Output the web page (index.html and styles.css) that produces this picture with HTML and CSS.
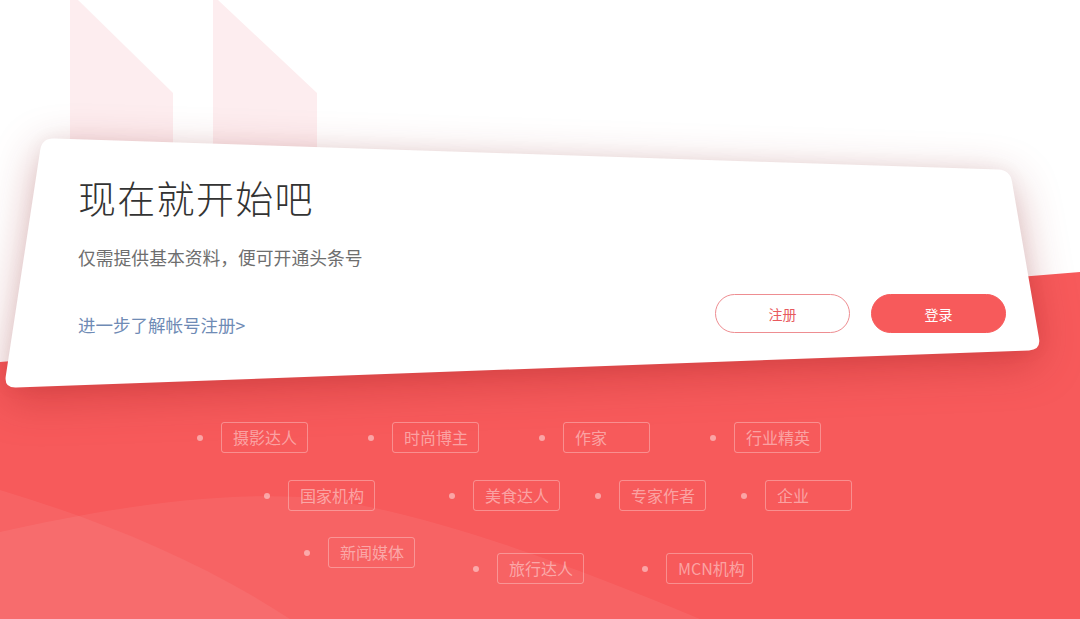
FILE: index.html
```html
<!DOCTYPE html>
<html lang="zh-CN">
<head>
<meta charset="utf-8">
<title>现在就开始吧</title>
<link rel="stylesheet" href="styles.css">
</head>
<body>
<div class="page">
  <svg class="backdrop" viewBox="0 0 1080 619" width="1080" height="619" aria-hidden="true">
    <polygon points="70,0 78,0 173,93 173,150 70,150" fill="#fdedef"/>
    <polygon points="213,0 218,0 317,93 317,150 213,150" fill="#fdedef"/>
    <polygon points="0,362 1080,272 1080,619 0,619" fill="#f75a5b"/>
    <path d="M0,532 C90,512 200,492 300,497 C400,503 560,560 700,619 L0,619 Z" fill="#ffffff" fill-opacity="0.06"/>
    <path d="M0,490 C100,520 200,560 290,619 L0,619 Z" fill="#ffffff" fill-opacity="0.06"/>
  </svg>

  <section class="card">
    <svg class="card-shape" width="1045" height="262" viewBox="0 0 1045 262" aria-hidden="true">
      <path d="M54,8.4 L998,39.6 Q1010,40 1012,51.8 L1039,208.2 Q1041,220 1029,220.4 L16,257.6 Q4,258 5.8,246.1 L40.2,19.9 Q42,8 54,8.4 Z" fill="#ffffff"/>
    </svg>
    <h1 class="title">现在就开始吧</h1>
    <p class="subtitle">仅需提供基本资料，便可开通头条号</p>
    <div class="actions">
      <a class="more" href="#">进一步了解帐号注册&gt;</a>
      <div class="buttons">
        <button class="btn btn-outline">注册</button>
        <button class="btn btn-fill">登录</button>
      </div>
    </div>
  </section>

  <section class="tags">
    <div class="row row1">
      <div class="item"><span class="dot"></span><span class="tag">摄影达人</span></div>
      <div class="item"><span class="dot"></span><span class="tag">时尚博主</span></div>
      <div class="item"><span class="dot"></span><span class="tag">作家</span></div>
      <div class="item"><span class="dot"></span><span class="tag">行业精英</span></div>
    </div>
    <div class="row row2">
      <div class="item"><span class="dot"></span><span class="tag">国家机构</span></div>
      <div class="item"><span class="dot"></span><span class="tag">美食达人</span></div>
      <div class="item"><span class="dot"></span><span class="tag">专家作者</span></div>
      <div class="item"><span class="dot"></span><span class="tag">企业</span></div>
    </div>
    <div class="row row3">
      <div class="item"><span class="dot"></span><span class="tag">新闻媒体</span></div>
      <div class="item"><span class="dot"></span><span class="tag">旅行达人</span></div>
      <div class="item"><span class="dot"></span><span class="tag">MCN机构</span></div>
    </div>
  </section>
</div>
</body>
</html>
```

FILE: styles.css
```css
* { box-sizing: border-box; }

html, body {
  margin: 0;
  padding: 0;
}

body {
  width: 1080px;
  height: 619px;
  overflow: hidden;
  background: #ffffff;
  font-family: "Noto Sans CJK SC", "Noto Sans", sans-serif;
}

.page {
  position: relative;
  width: 1080px;
  height: 619px;
  overflow: hidden;
  padding-top: 130px;
}

.backdrop {
  position: absolute;
  left: 0;
  top: 0;
  display: block;
}

.card {
  position: relative;
  width: 1045px;
  height: 262px;
  padding: 44px 39px 0 78px;
  display: flex;
  flex-direction: column;
}

.card-shape {
  position: absolute;
  left: 0;
  top: 0;
  display: block;
  overflow: visible;
  filter: drop-shadow(0 0 8px rgba(0, 0, 0, 0.04)) drop-shadow(0 12px 22px rgba(150, 20, 25, 0.33));
}

.title {
  position: relative;
  margin: 0;
  font-size: 38px;
  line-height: 46px;
  font-weight: 300;
  color: #333333;
  letter-spacing: 1.3px;
}

.subtitle {
  position: relative;
  margin: 24px 0 0;
  font-size: 17.8px;
  line-height: 26px;
  color: #6e6e6e;
}

.actions {
  position: relative;
  margin-top: 24px;
  display: flex;
  align-items: flex-end;
  justify-content: space-between;
}

.more {
  font-size: 17.5px;
  line-height: 16px;
  color: #6f8bb5;
  text-decoration: none;
}

.buttons {
  display: flex;
  gap: 21px;
}

.btn {
  width: 135px;
  height: 39px;
  border-radius: 20px;
  font-family: "Noto Sans CJK SC", sans-serif;
  font-size: 14px;
  cursor: pointer;
  padding: 0;
}

.btn-outline {
  background: #ffffff;
  border: 1px solid #ee8d91;
  color: #e85a5e;
}

.btn-fill {
  background: #f75a5b;
  border: 1px solid #f75a5b;
  color: #ffffff;
}

.tags {
  position: relative;
  padding-top: 30px;
  display: flex;
  flex-direction: column;
  gap: 27px;
}

.row {
  display: flex;
  align-items: flex-start;
}

.row1 { padding-left: 197px; gap: 60px; }
.row2 { padding-left: 264px; gap: 35px; }
.row2 .item:first-child { margin-right: 39px; }
.row3 { padding-left: 304px; gap: 58px; margin-top: -1px; }
.row3 .item:nth-child(n+2) { margin-top: 16px; }

.item {
  display: flex;
  align-items: center;
  gap: 18px;
}

.dot {
  width: 6px;
  height: 6px;
  border-radius: 50%;
  background: rgba(255, 255, 255, 0.45);
}

.tag {
  width: 87px;
  height: 31px;
  padding-left: 11px;
  border: 1px solid rgba(255, 255, 255, 0.32);
  border-radius: 3px;
  font-size: 16px;
  line-height: 29px;
  color: rgba(255, 255, 255, 0.45);
  white-space: nowrap;
}
```
